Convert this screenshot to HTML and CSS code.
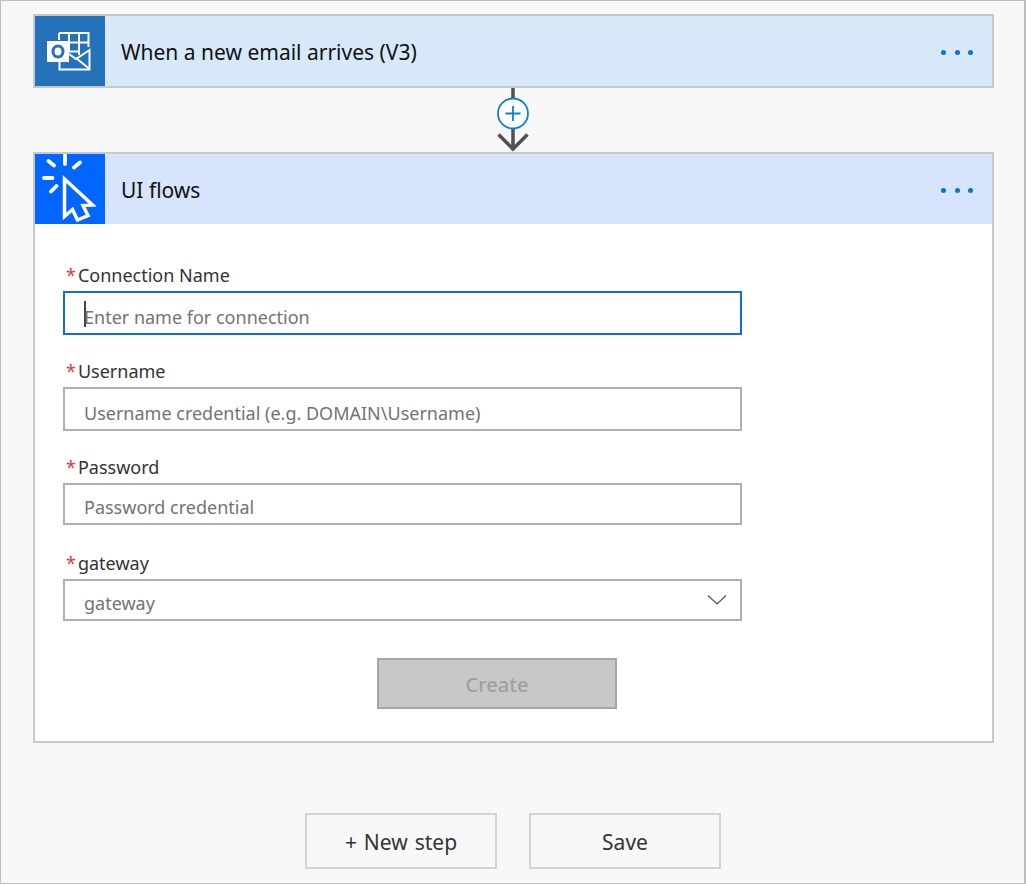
FILE: index.html
```html
<!DOCTYPE html>
<html lang="en">
<head>
    <meta charset="UTF-8">
    <title>UI flows</title>
    <link rel="stylesheet" href="styles.css">
</head>
<body>
<div class="frame">
    <div class="card">
        <div class="card-head head-outlook">
            <div class="card-icon icon-outlook">
                <svg width="50" height="40" viewBox="0 0 50 40">
                    <path d="M14 2H43.500V16M14 2V9M24 2V20M34 2V24M14 11.500H43.500M24 20.500H34" fill="none" stroke="#fff" stroke-width="2"/>
                    <path d="M2 10H24V31H2Z" fill="#fff"/>
                    <ellipse cx="13" cy="20.500" rx="5" ry="5.500" fill="none" stroke="#2372ba" stroke-width="3"/>
                    <path d="M14.500 31V38.500H44.500V19L31 28L24 23" fill="none" stroke="#fff" stroke-width="2"/>
                    <path d="M44.500 38L31 27" fill="none" stroke="#fff" stroke-width="2"/>
                </svg>
            </div>
            <div class="card-title">When a new email arrives (V3)</div>
            <div class="dots"><i></i><i></i><i></i></div>
        </div>
    </div>

    <div class="connector">
        <svg width="34" height="64" viewBox="0 0 34 64">
            <path d="M17 0V62" stroke="#505050" stroke-width="3.500" fill="none"/>
            <path d="M2.500 46.500L17 61L31.500 46.500" stroke="#505050" stroke-width="3.500" fill="none"/>
            <circle cx="17" cy="25.500" r="15" fill="#fff" stroke="#0f7fd6" stroke-width="1.800"/>
            <path d="M17 18V33M9.500 25.500H24.500" stroke="#0f7fd6" stroke-width="1.800" fill="none"/>
        </svg>
    </div>

    <div class="card">
        <div class="card-head head-flows">
            <div class="card-icon icon-flows">
                <svg width="70" height="70" viewBox="0 0 70 70">
                    <path d="M30 1V10M13.500 7L19 11.500M45 8.500L39 13.500M9 24H17.500M21.500 32L16 37.500" stroke="#fff" stroke-width="3.800" stroke-linecap="round" fill="none"/>
                    <path d="M29.500 25V62.500L37.500 55.500L42.500 66L53 61.500L48 51.500L57.500 51Z" fill="none" stroke="#fff" stroke-width="3.500"/>
                </svg>
            </div>
            <div class="card-title">UI flows</div>
            <div class="dots"><i></i><i></i><i></i></div>
        </div>
        <div class="form">
            <div class="field">
                <label class="label"><span class="req">*</span>Connection Name</label>
                <div class="input input-focus"><span class="caret"></span><span class="hint">Enter name for connection</span></div>
            </div>
            <div class="field">
                <label class="label"><span class="req">*</span>Username</label>
                <div class="input"><span class="hint">Username credential (e.g. DOMAIN\Username)</span></div>
            </div>
            <div class="field">
                <label class="label"><span class="req">*</span>Password</label>
                <div class="input input-short"><span class="hint">Password credential</span></div>
            </div>
            <div class="field">
                <label class="label"><span class="req">*</span>gateway</label>
                <div class="input input-short input-select">
                    <span class="hint">gateway</span>
                    <svg width="20" height="12" viewBox="0 0 20 12">
                        <path d="M1 1.500L10 10L19 1.500" fill="none" stroke="#555" stroke-width="1.200"/>
                    </svg>
                </div>
            </div>
            <div class="create-row">
                <div class="btn-create">Create</div>
            </div>
        </div>
    </div>

    <div class="actions">
        <div class="btn">+ New step</div>
        <div class="btn">Save</div>
    </div>
</div>
</body>
</html>
```

FILE: styles.css
```css
*{
    margin: 0;
    padding: 0;
    box-sizing: border-box;
}
body{
    font-family: "Noto Sans", "Open Sans", sans-serif;
    color: #222;
    background-color: #fff;
}
.frame{
    width: 1026px;
    height: 884px;
    background-color: #f8f8f8;
    border: 1px solid #bdbdbd;
    border-right-width: 2px;
    padding: 13px 31px 0 32px;
}
.card{
    width: 961px;
    border: 2px solid #c8c8c8;
    background-color: #fff;
}
.card-head{
    display: flex;
    align-items: center;
    height: 70px;
}
.head-outlook{
    background-color: #d7e8f9;
}
.head-flows{
    background-color: #d6e5fd;
}
.card-icon{
    display: flex;
    align-items: center;
    justify-content: center;
    width: 70px;
    height: 70px;
}
.icon-outlook{
    background-color: #2372ba;
}
.icon-flows{
    background-color: #0066ff;
}
.card-title{
    flex: 1;
    margin: 2px 0 0 16px;
    font-size: 21px;
    color: #111;
}
.dots{
    display: flex;
    gap: 8.500px;
    margin: 2px 19px 0 0;
}
.dots i{
    width: 5px;
    height: 5px;
    border-radius: 50%;
    background-color: #0b72d8;
}
.connector{
    display: flex;
    justify-content: center;
    height: 64px;
}
.form{
    padding: 38px 0 32px 28px;
}
.field{
    width: 679px;
    height: 96px;
}
.label{
    display: block;
    height: 29px;
    font-size: 18px;
    line-height: 26px;
    color: #333;
}
.req{
    color: #e0393e;
    margin: 0 2px 0 3px;
}
.input{
    display: flex;
    align-items: center;
    height: 44px;
    padding: 8px 0 0 19px;
    background-color: #fff;
    border: 2px solid #b0b0b0;
    font-size: 18px;
}
.input-short{
    height: 42px;
    padding-top: 6px;
}
.input-focus{
    border-color: #0b6cf0;
}
.input-select{
    justify-content: space-between;
    padding-right: 13px;
}
.input-select svg{
    margin-top: -6px;
}
.caret{
    width: 2px;
    height: 26px;
    margin: -6px -2px 0 0;
    background-color: #444;
}
.hint{
    color: #737373;
}
.create-row{
    padding: 12px 0 0 314px;
}
.btn-create{
    width: 240px;
    height: 51px;
    line-height: 50px;
    text-align: center;
    font-size: 20px;
    font-weight: 500;
    color: #a0a0a0;
    background-color: #c8c8c8;
    border: 2px solid #a6a6a6;
}
.actions{
    display: flex;
    justify-content: center;
    gap: 32px;
    margin-top: 70px;
}
.btn{
    width: 192px;
    height: 56px;
    line-height: 54px;
    text-align: center;
    font-size: 21px;
    word-spacing: 1.500px;
    color: #333;
    border: 2px solid #d4d4d4;
}
```
